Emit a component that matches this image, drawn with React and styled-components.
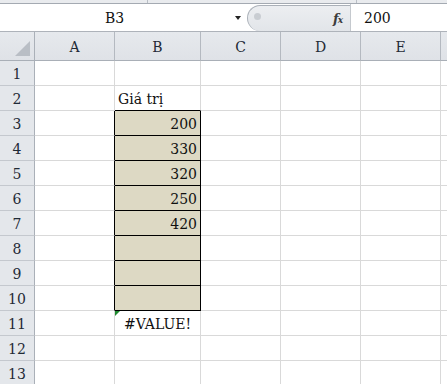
import React from "react";
import styled, { createGlobalStyle } from "styled-components";

const SERIF = `"DejaVu Serif", "Liberation Serif", serif`;

const Global = createGlobalStyle`
  html, body { margin: 0; padding: 0; background: #ffffff; overflow: hidden; }
  body {
    width: 447px;
    height: 384px;
    font-family: ${SERIF};
  }
`;

const Page = styled.div`
  width: 447px;
  height: 384px;
  overflow: hidden;
  color: #111;
  font-family: ${SERIF};
`;

const TopStrip = styled.div`
  height: 3px;
  background: #e9ebee;
  border-bottom: 1px solid #a4aab2;
  display: grid;
  grid-template-columns: 148px 209px 1fr;
`;

const StripSeg = styled.div`
  border-right: ${(p) => (p.$last ? "none" : "1px solid #b9bec5")};
`;

const FormulaBar = styled.div`
  height: 27px;
  display: flex;
  background: #ffffff;
  border-bottom: 1px solid #aeb3ba;
`;

const NameBox = styled.div`
  width: 247px;
  display: flex;
  align-items: center;
  font-size: 14px;
`;

const NameText = styled.div`
  width: 229px;
  text-align: center;
  padding-top: 1px;
`;

const Arrow = styled.div`
  width: 0;
  height: 0;
  border-left: 3.5px solid transparent;
  border-right: 3.5px solid transparent;
  border-top: 4px solid #222;
  margin-left: 6px;
  margin-top: 1px;
`;

const Pill = styled.div`
  width: 103px;
  margin-top: 1px;
  height: 26px;
  background: linear-gradient(#eceef1, #e2e5e9);
  border: 1px solid #aab0b8;
  border-right: none;
  border-bottom: none;
  border-radius: 13px 0 0 13px;
  display: flex;
  align-items: center;
  justify-content: space-between;
  padding: 0 8px 0 6px;
  box-sizing: border-box;
`;

const Knob = styled.div`
  width: 7px;
  height: 7px;
  border-radius: 50%;
  background: #c9cdd2;
  margin-top: -4px;
`;

const Fx = styled.div`
  font-style: italic;
  font-size: 13px;
  font-weight: bold;
  color: #3c3c3c;
  letter-spacing: -1px;
  span {
    font-size: 9px;
  }
`;

const FormulaInput = styled.div`
  flex: 1;
  border-left: 1px solid #c5c9ce;
  display: flex;
  align-items: center;
  padding-left: 13px;
  font-size: 14px;
  padding-top: 1px;
`;

const Grid = styled.div`
  display: grid;
  grid-template-columns: 35px 80px 86px 80px 80px 80px 1fr;
  grid-template-rows: 29px repeat(13, 25px);
`;

const HeadCell = styled.div`
  background: linear-gradient(#e6e9ed, #dfe2e7);
  border-right: 1px solid ${(p) => (p.$corner ? "#aab0b8" : "#b4b9c0")};
  border-bottom: 1px solid #a9afb7;
  box-sizing: border-box;
  display: flex;
  align-items: center;
  justify-content: center;
  font-size: 14px;
  color: #1f2a36;
  padding-top: 1px;
  position: relative;
`;

const RowHead = styled.div`
  background: #e4e7eb;
  border-right: 1px solid #aab0b8;
  border-bottom: 1px solid #c4c8ce;
  box-sizing: border-box;
  display: flex;
  align-items: center;
  justify-content: center;
  font-size: 14px;
  color: #1f2a36;
  padding-top: 1px;
`;

const Cell = styled.div`
  position: relative;
  background: ${(p) => p.$fill || "#ffffff"};
  border-right: 1px solid ${(p) => p.$br || "#d9d9d9"};
  border-bottom: 1px solid ${(p) => p.$bb || "#d9d9d9"};
  box-sizing: border-box;
  display: flex;
  align-items: flex-end;
  justify-content: ${(p) =>
    p.$align === "right" ? "flex-end" : p.$align === "center" ? "center" : "flex-start"};
  padding: 0 3px 2px 3px;
  font-size: 14px;
  line-height: 18px;
  white-space: nowrap;
`;

const ErrorFlag = styled.div`
  position: absolute;
  left: 0;
  top: 0;
  width: 0;
  height: 0;
  border-top: 5px solid #1e8a2e;
  border-right: 5px solid transparent;
`;

const cols = ["A", "B", "C", "D", "E", ""];
const values = { 2: "Giá trị", 3: "200", 4: "330", 5: "320", 6: "250", 7: "420", 11: "#VALUE!" };
const FILL = "#ddd9c4";
const BLACK = "#000000";

function cellProps(r, c) {
  const inBox = c === 1 && r >= 3 && r <= 10;
  const p = {};
  if (inBox) {
    p.$fill = FILL;
    p.$br = BLACK;
    p.$bb = BLACK;
  }
  if (c === 0 && r >= 3 && r <= 10) p.$br = BLACK;
  if (c === 1 && r === 2) p.$bb = BLACK;
  if (c === 1 && values[r]) {
    p.$align = r === 2 ? "left" : r === 11 ? "center" : "right";
  }
  return p;
}

export default function App() {
  const rows = Array.from({ length: 13 }, (_, i) => i + 1);
  return (
    <Page>
      <Global />
      <TopStrip>
        <StripSeg />
        <StripSeg />
        <StripSeg $last />
      </TopStrip>
      <FormulaBar>
        <NameBox>
          <NameText>B3</NameText>
          <Arrow />
        </NameBox>
        <Pill>
          <Knob />
          <Fx>
            f<span>x</span>
          </Fx>
        </Pill>
        <FormulaInput>200</FormulaInput>
      </FormulaBar>
      <Grid>
        <HeadCell $corner>
          <svg width="35" height="28" style={{ position: "absolute", left: 0, top: 0 }}>
            <polygon points="30,9 30,24 15,24" fill="#b9bec5" />
          </svg>
        </HeadCell>
        {cols.map((c, i) => (
          <HeadCell key={i}>{c}</HeadCell>
        ))}
        {rows.map((r) => (
          <React.Fragment key={r}>
            <RowHead>{r}</RowHead>
            {cols.map((_, c) => (
              <Cell key={c} {...cellProps(r, c)}>
                {c === 1 && r === 11 && <ErrorFlag />}
                {c === 1 ? values[r] : null}
              </Cell>
            ))}
          </React.Fragment>
        ))}
      </Grid>
    </Page>
  );
}
